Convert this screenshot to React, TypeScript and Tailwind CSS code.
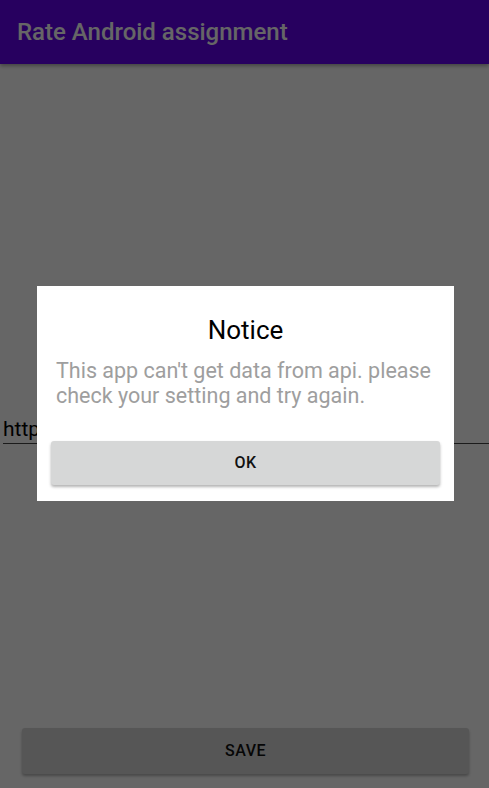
export default function App() {
  return (
    <div
      className="relative h-[788px] w-full flex flex-col bg-white overflow-hidden"
      style={{ fontFamily: "Roboto, 'Liberation Sans', sans-serif" }}
    >
      <header className="h-16 shrink-0 bg-[#6200EE] flex items-center px-[17px] shadow-[0_2px_4px_rgba(0,0,0,0.35)] z-10">
        <h1 className="text-white text-[24px] font-medium">Rate Android assignment</h1>
      </header>

      <main className="flex-1 flex flex-col">
        <div className="mt-[344px] ml-[3px] h-9 border-b border-[#444] flex items-end pb-[3px]">
          <span className="text-black text-[21px] leading-none">http://</span>
        </div>
        <div className="flex-1" />
        <button className="ml-[22px] mr-[20px] mb-[14px] h-[46px] rounded-[3px] bg-[#d6d7d7] shadow-[0_2px_3px_rgba(0,0,0,0.3)] text-[#111] text-[16px] font-medium tracking-[0.5px]">
          SAVE
        </button>
      </main>

      {/* dim layer + dialog */}
      <div className="absolute inset-0 z-20 bg-black/60">
        <div className="absolute left-[37px] top-[286px] w-[417px] h-[215px] bg-white flex flex-col pl-[14px] pr-[14px]">
          <h2 className="text-center text-black text-[26px] leading-none mt-[31px]">Notice</h2>
          <p className="mt-[15px] px-[5px] text-[#9e9e9e] text-[21.5px] leading-[25px]">
            This app can't get data from api. please check your setting and try again.
          </p>
          <button className="mt-auto mb-[16px] h-[44px] rounded-[3px] bg-[#d6d7d7] shadow-[0_2px_3px_rgba(0,0,0,0.3)] text-[#111] text-[16px] font-medium tracking-[0.5px]">
            OK
          </button>
        </div>
      </div>
    </div>
  );
}
